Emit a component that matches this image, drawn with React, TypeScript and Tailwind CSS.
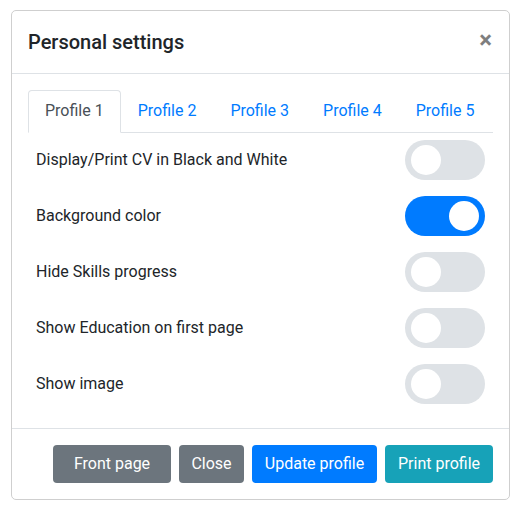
import React from "react";

const rows = [
  { label: "Display/Print CV in Black and White", on: false },
  { label: "Background color", on: true },
  { label: "Hide Skills progress", on: false },
  { label: "Show Education on first page", on: false },
  { label: "Show image", on: false },
];

function Toggle({ on }: { on: boolean }) {
  return (
    <div
      className={
        "w-[80px] h-[40px] rounded-full flex items-center px-[6px] " +
        (on ? "bg-[#007bff] justify-end" : "bg-[#dee2e6] justify-start")
      }
    >
      <div className="w-[30px] h-[30px] rounded-full bg-white" />
    </div>
  );
}

export default function App() {
  return (
    <div className="w-[524px] h-[512px] bg-white font-['Roboto',sans-serif] text-[#212529] pt-[10px] pl-[11px]">
      <div className="w-[499px] border border-[#cfcfcf] rounded-[5px] bg-white">
        <div className="flex items-center justify-between px-[16px] py-[16px] border-b border-[#dee2e6]">
          <div className="text-[20px] leading-[30px] font-medium">Personal settings</div>
          <div className="text-[24px] leading-[24px] font-bold text-[#000] opacity-50 -mt-[4px] mr-[1px]">×</div>
        </div>
        <div className="px-[16px] pt-[16px] pb-[16px]">
          <div className="flex border-b border-[#dee2e6] text-[16px] leading-[24px]">
            <div className="-mb-px px-[16px] py-[8px] border border-[#dee2e6] border-b-white rounded-t-[4px] text-[#495057] bg-white">
              Profile 1
            </div>
            {["Profile 2", "Profile 3", "Profile 4", "Profile 5"].map((t) => (
              <div key={t} className="px-[16px] py-[8px] border border-transparent text-[#007bff]">
                {t}
              </div>
            ))}
          </div>
          <div className="px-[8px] -mt-px">
            {rows.map((r) => (
              <div key={r.label} className="flex items-center justify-between py-[8px]">
                <span className="text-[16px] leading-[24px]">{r.label}</span>
                <Toggle on={r.on} />
              </div>
            ))}
          </div>
        </div>
        <div className="border-t border-[#dee2e6] px-[16px] py-[16px] flex justify-end gap-[8px] text-[16px] leading-[24px] text-white">
          <button className="h-[38px] w-[118px] rounded-[4px] bg-[#6c757d]">Front page</button>
          <button className="h-[38px] w-[65px] rounded-[4px] bg-[#6c757d]">Close</button>
          <button className="h-[38px] w-[125px] rounded-[4px] bg-[#007bff]">Update profile</button>
          <button className="h-[38px] w-[108px] rounded-[4px] bg-[#17a2b8]">Print profile</button>
        </div>
      </div>
    </div>
  );
}
